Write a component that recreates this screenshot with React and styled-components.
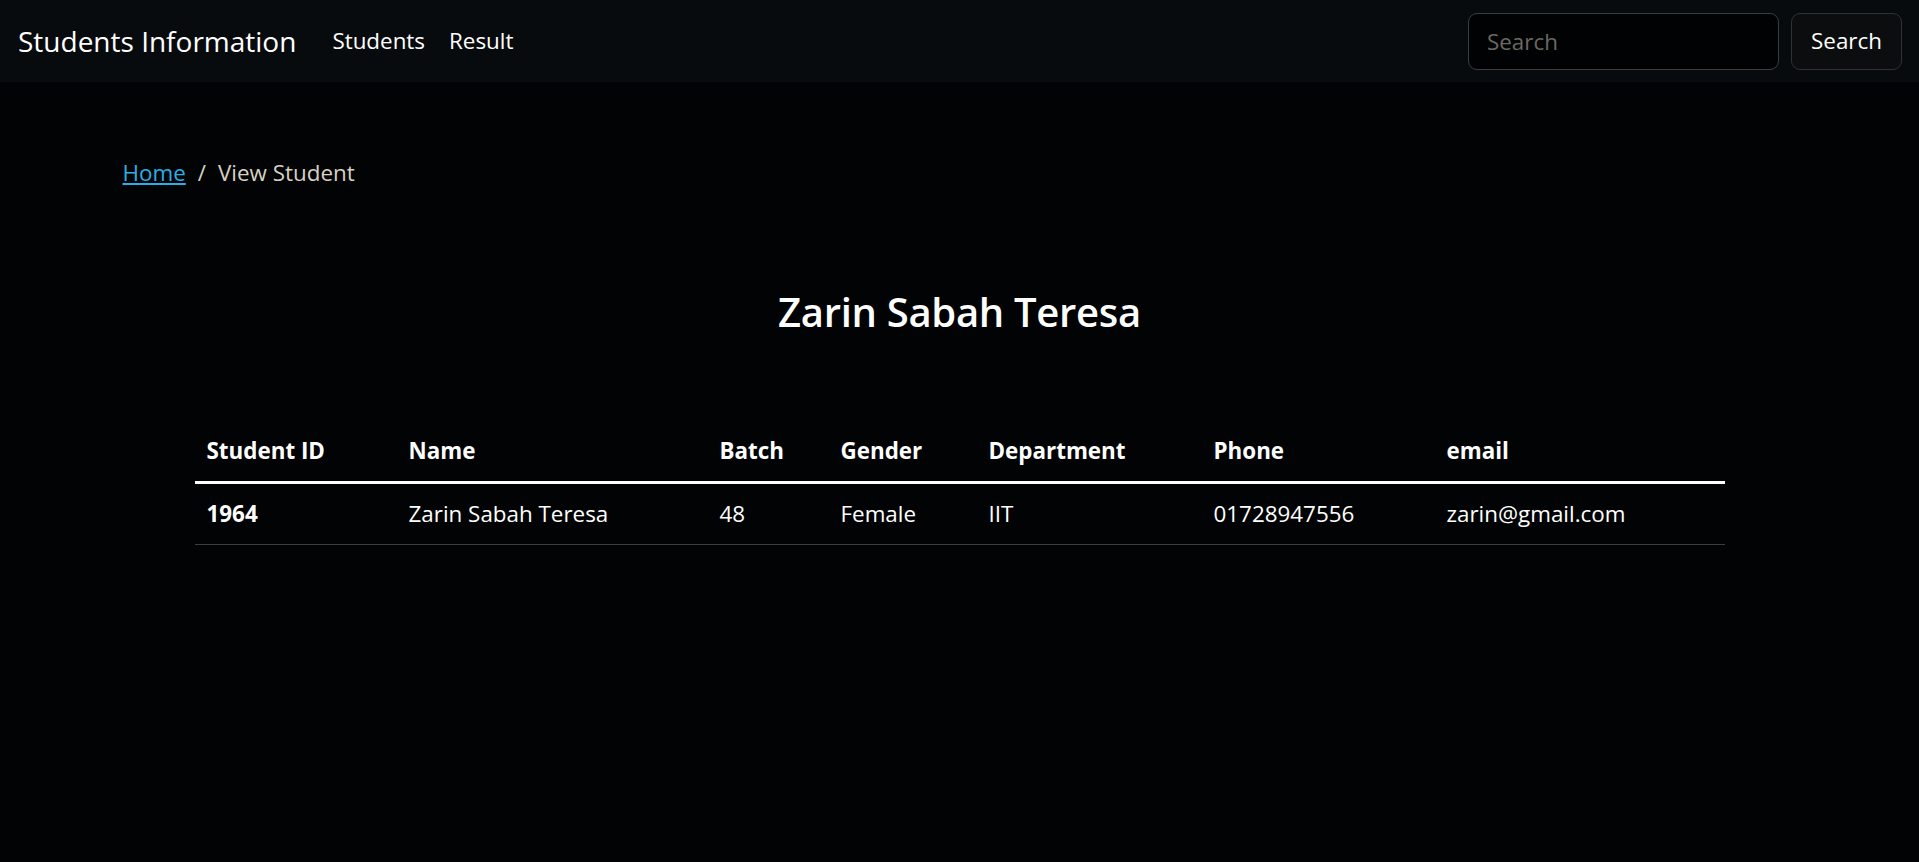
import React from "react";
import styled, { createGlobalStyle } from "styled-components";

const Global = createGlobalStyle`
  html, body { margin: 0; padding: 0; background: #020304; }
  body {
    font-family: "Open Sans", "Noto Sans", sans-serif;
    font-size: 22.4px;
    line-height: 36px;
    color: #ffffff;
    min-height: 862px;
  }
  * { box-sizing: border-box; }
`;

const Navbar = styled.nav`
  height: 82px;
  background: #080b0d;
  display: flex;
  align-items: center;
  padding: 0 17px 0 18px;
`;

const Brand = styled.a`
  font-size: 28px;
  line-height: 45px;
  color: #fff;
  text-decoration: none;
  margin-right: 24px;
  white-space: nowrap;
`;

const NavList = styled.ul`
  display: flex;
  list-style: none;
  margin: 0;
  padding: 0;
  flex: 1;
`;

const NavLink = styled.a`
  display: block;
  padding: 12px;
  color: #fff;
  text-decoration: none;
  font-size: 22.4px;
`;

const SearchForm = styled.form`
  display: flex;
  gap: 12px;
`;

const SearchInput = styled.input`
  width: 311px;
  height: 57px;
  background: #010203;
  border: 1.5px solid #3a3d40;
  border-radius: 9px;
  padding: 0 18px;
  font: inherit;
  font-size: 22.4px;
  color: #fff;
  outline: none;
  &::placeholder { color: #6b6862; }
`;

const SearchButton = styled.button`
  height: 57px;
  width: 111px;
  background: #0b0d0f;
  border: 1.5px solid #2e3135;
  border-radius: 9px;
  font: inherit;
  font-size: 22.4px;
  color: #fff;
`;

const Container = styled.main`
  width: 1710px;
  margin: 0 auto;
  padding: 73px 18px 0;
`;

const Breadcrumb = styled.ol`
  display: flex;
  list-style: none;
  margin: 0;
  padding: 0;
`;

const Crumb = styled.li`
  color: #d8d1c2;
  & + &::before {
    content: "/";
    padding: 0 12px;
    color: #d8d1c2;
  }
`;

const CrumbLink = styled.a`
  color: #2aaee9;
  text-decoration: underline;
`;

const Title = styled.h2`
  margin: 92px 0 80px;
  text-align: center;
  font-size: 40px;
  font-weight: 600;
  line-height: 57.6px;
  letter-spacing: -0.3px;
`;

const Table = styled.table`
  width: 1530px;
  margin: 0 auto;
  border-collapse: collapse;
  table-layout: fixed;
`;

const HeadCell = styled.th`
  text-align: left;
  padding: 12px;
  font-weight: 700;
  border-bottom: 3px solid #ffffff;
`;

const Cell = styled.td`
  padding: 12px;
  font-weight: ${(p) => (p.$bold ? 700 : 400)};
  border-bottom: 1.5px solid #3b3d3f;
`;

const columns = [
  ["Student ID", 202],
  ["Name", 311],
  ["Batch", 121],
  ["Gender", 148],
  ["Department", 225],
  ["Phone", 233],
  ["email", 290],
];

const row = ["1964", "Zarin Sabah Teresa", "48", "Female", "IIT", "01728947556", "zarin@gmail.com"];

export default function App() {
  return (
    <>
      <Global />
      <Navbar>
        <Brand href="#">Students Information</Brand>
        <NavList>
          <li><NavLink href="#">Students</NavLink></li>
          <li><NavLink href="#">Result</NavLink></li>
        </NavList>
        <SearchForm onSubmit={(e) => e.preventDefault()}>
          <SearchInput type="search" placeholder="Search" />
          <SearchButton type="submit">Search</SearchButton>
        </SearchForm>
      </Navbar>
      <Container>
        <Breadcrumb>
          <Crumb><CrumbLink href="#">Home</CrumbLink></Crumb>
          <Crumb>View Student</Crumb>
        </Breadcrumb>
        <Title>Zarin Sabah Teresa</Title>
        <Table>
          <colgroup>
            {columns.map(([c, w]) => <col key={c} style={{ width: w }} />)}
          </colgroup>
          <thead>
            <tr>{columns.map(([c]) => <HeadCell key={c}>{c}</HeadCell>)}</tr>
          </thead>
          <tbody>
            <tr>{row.map((v, i) => <Cell key={i} $bold={i === 0}>{v}</Cell>)}</tr>
          </tbody>
        </Table>
      </Container>
    </>
  );
}
